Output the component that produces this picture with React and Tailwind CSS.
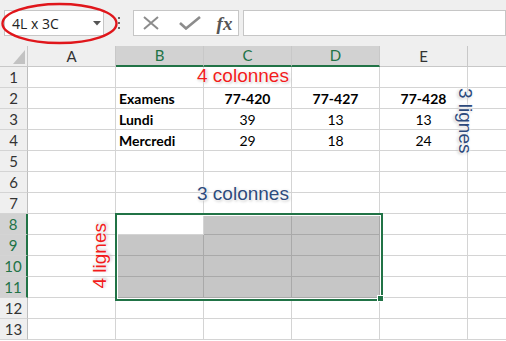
import React from "react";

const cols = ["A", "B", "C", "D", "E"];
const selCols = ["B", "C", "D"];

// cell contents, keyed by row then column
const data = {
  2: { B: ["Examens", "left", true], C: ["77-420", "center", true], D: ["77-427", "center", true], E: ["77-428", "center", true] },
  3: { B: ["Lundi", "left", true], C: ["39", "center"], D: ["13", "center"], E: ["13", "center"] },
  4: { B: ["Mercredi", "left", true], C: ["29", "center"], D: ["18", "center"], E: ["24", "center"] },
};

const isSelected = (r, c) => r >= 8 && r <= 11 && selCols.includes(c) && !(r === 8 && c === "B");

function HeaderRow() {
  return (
    <div className="flex h-[21px]">
      <div className="relative w-[28px] shrink-0 border-r border-b border-[#c8c8c8] bg-[#efefef]">
        <svg className="absolute left-[13px] top-[4px]" width="12" height="14" viewBox="0 0 12 14">
          <polygon points="12,0 12,14 0,14" fill="#c2c2c2" />
        </svg>
      </div>
      {cols.map((c) => {
        const sel = selCols.includes(c);
        return (
          <div
            key={c}
            className={
              "w-[88px] shrink-0 border-r flex items-center justify-center text-[15px] " +
              (sel
                ? "bg-[#d2d2d2] border-[#c8c8c8] border-b-2 border-b-[#217346] text-[#217346]"
                : "bg-[#efefef] border-[#c8c8c8] border-b text-[#333]")
            }
          >
            {c}
          </div>
        );
      })}
      <div className="flex-1 border-b border-[#c8c8c8] bg-[#efefef]" />
    </div>
  );
}

function Row({ n }) {
  const selRow = n >= 8 && n <= 11;
  return (
    <div className="flex h-[21px]">
      <div
        className={
          "w-[28px] shrink-0 border-b border-[#d4d4d4] flex items-center justify-center text-[15px] " +
          (selRow
            ? "bg-[#d2d2d2] border-r-2 border-r-[#217346] text-[#217346]"
            : "bg-[#efefef] border-r border-r-[#bdbdbd] text-[#333]")
        }
      >
        {n}
      </div>
      {cols.map((c) => {
        const cell = data[n]?.[c];
        const sel = isSelected(n, c);
        return (
          <div
            key={c}
            className={
              "w-[88px] shrink-0 border-r border-b flex items-center pt-[1px] text-[14px] text-black " +
              (sel ? "bg-[#c6c6c6] border-[#a9a9a9] " : "bg-white border-[#d4d4d4] ") +
              (cell && cell[1] === "center" ? "justify-center " : "pl-[3px] ") +
              (cell && cell[2] ? "font-bold" : "")
            }
          >
            {cell ? cell[0] : ""}
          </div>
        );
      })}
      <div className="flex-1 border-b border-[#d4d4d4] bg-white" />
    </div>
  );
}

const glowRed = { textShadow: "0 0 2px #fff, 0 0 3px #fff, 0 0 4px #fff, 1px 1px 3px rgba(0,0,0,0.35)" };

export default function App() {
  return (
    <div className="relative w-[506px] h-[341px] overflow-hidden bg-white font-['Lato',sans-serif]">
      {/* formula bar */}
      <div className="flex items-start h-[46px] bg-[#efefef] pt-[10px] pl-[4px]">
        <div className="relative w-[102px] h-[26px] bg-white border border-[#c6c6c6] flex items-center pl-[7px] text-[14px] text-[#222] font-['Open_Sans',sans-serif]">
          4L x 3C
          <svg className="absolute left-[88px] top-[10px]" width="8" height="5" viewBox="0 0 8 5">
            <polygon points="0,0 8,0 4,4.5" fill="#555" />
          </svg>
        </div>
        <div className="ml-[14px] mt-[7px] flex flex-col gap-[3px]">
          <span className="w-[2px] h-[2px] bg-[#666]" />
          <span className="w-[2px] h-[2px] bg-[#666]" />
          <span className="w-[2px] h-[2px] bg-[#666]" />
        </div>
        <div className="ml-[13px] w-[109px] h-[26px] bg-white border border-[#c6c6c6] flex items-center">
          <svg className="ml-[8px]" width="18" height="14" viewBox="0 0 18 14">
            <path d="M2 1 L16 13 M16 1 L2 13" stroke="#8c8c8c" strokeWidth="2" fill="none" />
          </svg>
          <svg className="ml-[19px]" width="22" height="14" viewBox="0 0 22 14">
            <path d="M1 7 L7 12.5 L21 1" stroke="#8c8c8c" strokeWidth="2.6" fill="none" />
          </svg>
          <span className="ml-[16px] font-['Liberation_Serif',serif] italic font-bold text-[19px] leading-none text-[#555]">
            fx
          </span>
        </div>
        <div className="ml-[4px] w-[270px] h-[26px] bg-white border border-[#c6c6c6]" />
      </div>

      {/* sheet */}
      <HeaderRow />
      {Array.from({ length: 13 }, (_, i) => (
        <Row key={i} n={i + 1} />
      ))}

      {/* selection B8:D11 */}
      <div className="absolute left-[115px] top-[213px] w-[268px] h-[88px] border-2 border-[#217346] shadow-[inset_0_0_0_1px_#fff]" />
      <div className="absolute left-[377px] top-[295px] w-[7px] h-[7px] bg-[#217346] border border-white" />

      {/* red ellipse round name box */}
      <svg className="absolute left-0 top-0" width="125" height="48" viewBox="0 0 125 48">
        <ellipse cx="59.5" cy="23.5" rx="57" ry="19.5" fill="none" stroke="#e0161b" strokeWidth="2.4" />
      </svg>

      {/* annotations */}
      <span
        className="absolute left-[197px] top-[66px] text-[19px] leading-none text-[#f21b1b] font-['Liberation_Sans',sans-serif] whitespace-nowrap"
        style={glowRed}
      >
        4 colonnes
      </span>
      <span
        className="absolute left-[197px] top-[184px] text-[19px] leading-none text-[#2d4a7c] font-['Liberation_Sans',sans-serif] whitespace-nowrap"
        style={glowRed}
      >
        3 colonnes
      </span>
      <span
        className="absolute left-[456px] top-[88px] text-[19px] leading-none text-[#2d4a7c] font-['Liberation_Sans',sans-serif] whitespace-nowrap [writing-mode:vertical-rl]"
        style={glowRed}
      >
        3 lignes
      </span>
      <span
        className="absolute left-[90px] top-[223px] text-[19px] leading-none text-[#f21b1b] font-['Liberation_Sans',sans-serif] whitespace-nowrap [writing-mode:vertical-rl] rotate-180"
        style={glowRed}
      >
        4 lignes
      </span>
    </div>
  );
}
